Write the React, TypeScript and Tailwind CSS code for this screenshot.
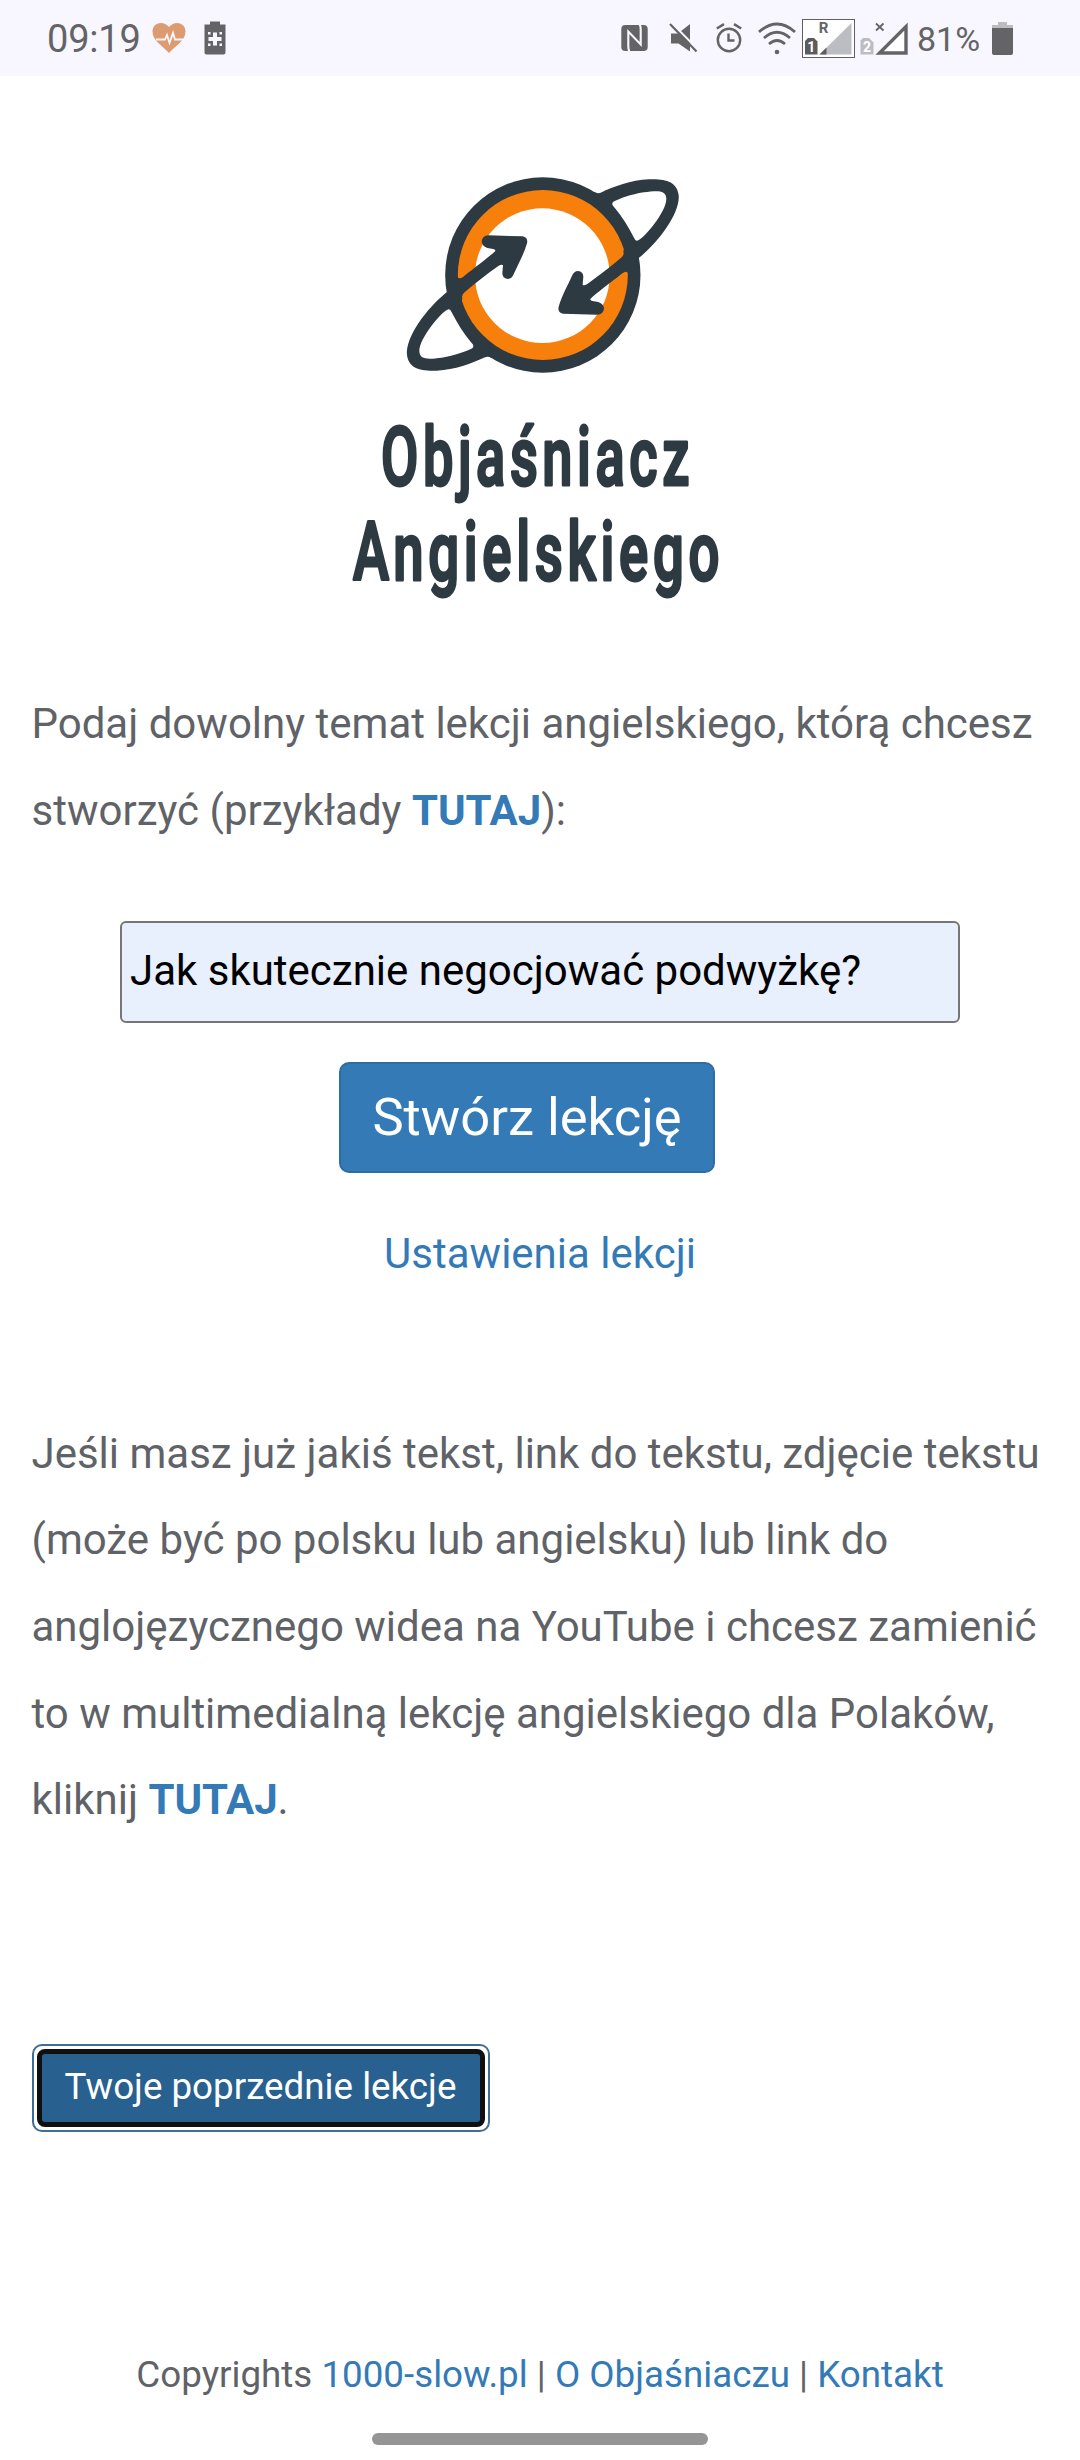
import type { ReactNode } from 'react'

const INK = '#2d3a42'
const GREY = '#646466'

function HeartIcon() {
  return (
    <svg className="w-[34px] h-[34px]" viewBox="0 0 34 34">
      <path
        d="M17 32 C12 26 0 20 0.5 10 C1 2 11 -1 17 6 C23 -1 33 2 33.5 10 C34 20 22 26 17 32Z"
        fill="#dd9b72"
      />
      <path
        d="M4 18.5 H13 L15 14 L17.5 22 L21 12 L23 18.5 H31"
        fill="none"
        stroke="#f8f7ff"
        strokeWidth="1.8"
      />
    </svg>
  )
}

function BatteryCareIcon() {
  return (
    <svg className="w-[22px] h-[34px]" viewBox="0 0 22 34">
      <path d="M6 0.5 H16 V3.5 H21.5 V31.5 Q21.5 33.5 19.5 33.5 H2.5 Q0.5 33.5 0.5 31.5 V3.5 H6Z" fill={GREY} />
      <g fill="#f8f7ff">
        <path d="M9 11.5 H13 V16 H17.5 V20 H13 V24.5 H9 V20 H4.5 V16 H9Z" />
        <rect x="4" y="11" width="2.5" height="2.5" />
        <rect x="15.5" y="11" width="2.5" height="2.5" />
        <rect x="4" y="22.5" width="2.5" height="2.5" />
        <rect x="15.5" y="22.5" width="2.5" height="2.5" />
      </g>
    </svg>
  )
}

function NfcIcon() {
  return (
    <svg className="w-[27px] h-[28px]" viewBox="0 0 27 28">
      <rect x="0.3" y="1" width="26.4" height="26" rx="4" fill={GREY} />
      <path d="M8.5 28 Q7.3 26 7.3 22 V7.500 L19.700 20.500 V6 Q19.700 2 18.500 0" fill="none" stroke="#f8f7ff" strokeWidth="2.100" />
    </svg>
  )
}

function MuteIcon() {
  return (
    <svg className="w-[29px] h-[30px]" viewBox="0 0 29 30">
      <path d="M2 10.5 H9 L21 1 V28.5 L9.5 20.5 H2Z" fill={GREY} />
      <path d="M2.5 0 L29 26.5" stroke="#f8f7ff" strokeWidth="2.2" />
      <path d="M1 1 L27.5 28.5" stroke={GREY} strokeWidth="2.2" />
    </svg>
  )
}

function AlarmIcon() {
  return (
    <svg className="w-[26px] h-[30px]" viewBox="0 0 26 30" fill="none" stroke={GREY}>
      <circle cx="13" cy="17" r="11.2" strokeWidth="2.4" />
      <path d="M12.5 10.5 V17.5 H18.5" strokeWidth="2.4" />
      <path d="M0.8 5.5 L8 1.2 M18 1.2 L25.2 5.5" strokeWidth="2.6" />
    </svg>
  )
}

function WifiIcon() {
  return (
    <svg className="w-[38px] h-[33px]" viewBox="0 0 38 33" fill="none" stroke={GREY} strokeWidth="2.8">
      <path d="M1 10 Q19 -6 37 10" />
      <path d="M6 16 Q19 4.5 32 16" />
      <path d="M11 22 Q19 15 27 22" />
      <circle cx="19" cy="30" r="2.3" fill={GREY} stroke="none" />
    </svg>
  )
}

function SimOneIcon() {
  return (
    <svg className="w-[53px] h-[39px]" viewBox="0 0 53 39">
      <rect x="0.5" y="0.5" width="52" height="38" fill="#fff" stroke="#5f5f66" />
      <path d="M49.5 4 V35.5 H17.5Z" fill="#bcbdc2" />
      <path d="M24.5 28.5 V35.5 H17.5Z" fill="#5c5c5f" />
      <path d="M6 19 H12 L15.5 22.5 V35.5 H3 V22Z" fill="#5c5c5f" />
      <text x="9.3" y="32.5" textAnchor="middle" className="font-bold text-[14px]" fill="#fff">1</text>
      <text x="21.5" y="14" textAnchor="middle" className="font-bold text-[15px]" fill={GREY}>R</text>
    </svg>
  )
}

function SimTwoIcon() {
  return (
    <svg className="w-[48px] h-[33px]" viewBox="0 0 48 33">
      <path d="M3 16 H9 L13.5 20.5 V32.5 H0.5 V18.5Z" fill="#bcbdc2" />
      <text x="7" y="30" textAnchor="middle" className="font-bold text-[14px]" fill="#fff">2</text>
      <path d="M16 1.5 L23.5 8.5 M23.5 1.5 L16 8.5" stroke={GREY} strokeWidth="1.8" />
      <path d="M46 4.5 V31 H19.5Z" fill="#fff" stroke={GREY} strokeWidth="3.4" />
    </svg>
  )
}

function BatteryIcon() {
  return (
    <svg className="w-[21px] h-[33px]" viewBox="0 0 21 33">
      <path d="M6 0 H15 V3 H21 V6 H0 V3 H6Z" fill="#bcbdc2" />
      <path d="M0 6 H21 V31 Q21 33 19 33 H2 Q0 33 0 31Z" fill={GREY} />
    </svg>
  )
}

function StatusBar() {
  return (
    <header className="flex h-[76px] items-center bg-[#f8f7ff] pl-[47px] pr-[67px] text-[#646466]">
      <span className="w-[105px] pt-[2px] text-[38px] leading-none tracking-[-0.2px]">09:19</span>
      <HeartIcon />
      <span className="w-[18px]" />
      <BatteryCareIcon />
      <div className="ml-auto flex items-center">
        <NfcIcon />
        <span className="w-[21px]" />
        <MuteIcon />
        <span className="w-[18px]" />
        <AlarmIcon />
        <span className="w-[16px]" />
        <WifiIcon />
        <span className="w-[6px]" />
        <SimOneIcon />
        <span className="w-[5px]" />
        <SimTwoIcon />
        <span className="w-[9px]" />
        <span className="w-[75px] pt-[2px] text-[34px] leading-none">81%</span>
        <BatteryIcon />
      </div>
    </header>
  )
}

// The two halves of the orbit are the same drawing turned by 180 degrees
const HALF_TURN = 'rotate(180 488.5 375)'

function OrbitLoop() {
  return (
    <>
      <path
        d="M198 428 C140 476 76 560 81 615 C86 655 120 664 170 662 C225 660 275 640 315 622 Q325 618 335 625 L340 560 L240 400Z"
        fill={INK}
      />
      <path
        d="M206 478 C188 480 117 565 118 604 C119 632 150 627 185 623 C225 617 258 604 277 595 Q285 588 273 577 C250 550 232 520 215 487 Q211 477 206 478Z"
        fill="#fff"
      />
    </>
  )
}

function OrbitArrow() {
  return (
    <path
      d="M200 440 L232 380 Q238 389 250 380 C290 348 325 323 346 303 Q347 297 335 296 L322 294 Q305 288 305 274 Q307 257 325 256 L428 259 Q445 263 441 280 C431 315 413 345 401 373 Q395 387 383 387 Q367 385 367 370 L369 346 Q366 341 355 348 C320 373 285 400 252 428 Q244 435 247 448 L230 480Z"
      fill={INK}
    />
  )
}

function Logo() {
  return (
    <svg className="h-[460px] w-[420px] overflow-visible" viewBox="0 0 420 460">
      <g transform="translate(50 0) scale(0.33333)">
        <circle cx="488.5" cy="375" r="293" fill={INK} />
        <OrbitLoop />
        <g transform={HALF_TURN}>
          <OrbitLoop />
        </g>
        <circle cx="488.5" cy="375" r="255" fill="#f77f0c" />
        <circle cx="487" cy="377" r="202" fill="#fff" />
        <OrbitArrow />
        <g transform={HALF_TURN}>
          <OrbitArrow />
        </g>
      </g>
      <g
        className="font-[Roboto,sans-serif] font-medium"
        fill={INK}
        stroke={INK}
        strokeWidth="3"
        strokeLinejoin="round"
        fontSize="82"
        letterSpacing="7"
      >
        <text x="51" y="334.5" textLength="313" lengthAdjust="spacingAndGlyphs">Objaśniacz</text>
        <text x="23" y="429.5" textLength="371" lengthAdjust="spacingAndGlyphs">Angielskiego</text>
      </g>
    </svg>
  )
}

function Link({ children, bold = false }: { children: ReactNode; bold?: boolean }) {
  return (
    <a href="#" className={bold ? 'font-bold text-[#337ab7]' : 'text-[#337ab7]'}>
      {children}
    </a>
  )
}

export default function App() {
  return (
    <div className="flex h-[2460px] w-[1080px] flex-col overflow-hidden bg-white font-[Roboto,sans-serif] text-[#5f6368]">
      <StatusBar />

      <main className="flex flex-col px-[31.5px] text-[42px] leading-[86.6px]">
        <div className="mt-[74px] flex justify-center">
          <Logo />
        </div>

        <p className="mt-[71px] whitespace-nowrap">
          Podaj dowolny temat lekcji angielskiego, którą chcesz
          <br />
          stworzyć (przykłady <Link bold>TUTAJ</Link>):
        </p>

        {/* Topic form */}
        <div className="mt-[67px] flex flex-col items-center">
          <input
            className="h-[102px] w-[840px] rounded-[6px] border-2 border-[#767676] bg-[#e8effd] pr-2 pb-[3px] pl-2 text-black"
            defaultValue="Jak skutecznie negocjować podwyżkę?"
          />
          <button className="mt-[39px] mr-[26px] h-[111px] w-[376px] rounded-[10px] border-2 border-[#2e6da4] bg-[#337ab7] text-[52.5px] leading-none text-white">
            Stwórz lekcję
          </button>
          <div className="mt-[38px]">
            <Link>Ustawienia lekcji</Link>
          </div>
        </div>

        <p className="mt-[113px] whitespace-nowrap">
          Jeśli masz już jakiś tekst, link do tekstu, zdjęcie tekstu
          <br />
          (może być po polsku lub angielsku) lub link do
          <br />
          anglojęzycznego widea na YouTube i chcesz zamienić
          <br />
          to w multimedialną lekcję angielskiego dla Polaków,
          <br />
          kliknij <Link bold>TUTAJ</Link>.
        </p>

        {/* Focused button with its double ring */}
        <div className="mt-[200px] flex h-[88px] w-[458px] rounded-[10px] border-2 border-[#3f6d94] p-[3px]">
          <button className="flex-1 rounded-[8px] border-[5px] border-[#101010] bg-[#286090] text-[36.75px] leading-none whitespace-nowrap text-white">
            Twoje poprzednie lekcje
          </button>
        </div>
      </main>

      <footer className="mt-auto flex flex-col items-center pb-[15px]">
        <p className="text-[36.75px] leading-[50px]">
          Copyrights <Link>1000-slow.pl</Link> | <Link>O Objaśniaczu</Link> | <Link>Kontakt</Link>
        </p>
        <div className="mt-[33px] h-[12px] w-[336px] rounded-full bg-[#959595]" />
      </footer>
    </div>
  )
}
